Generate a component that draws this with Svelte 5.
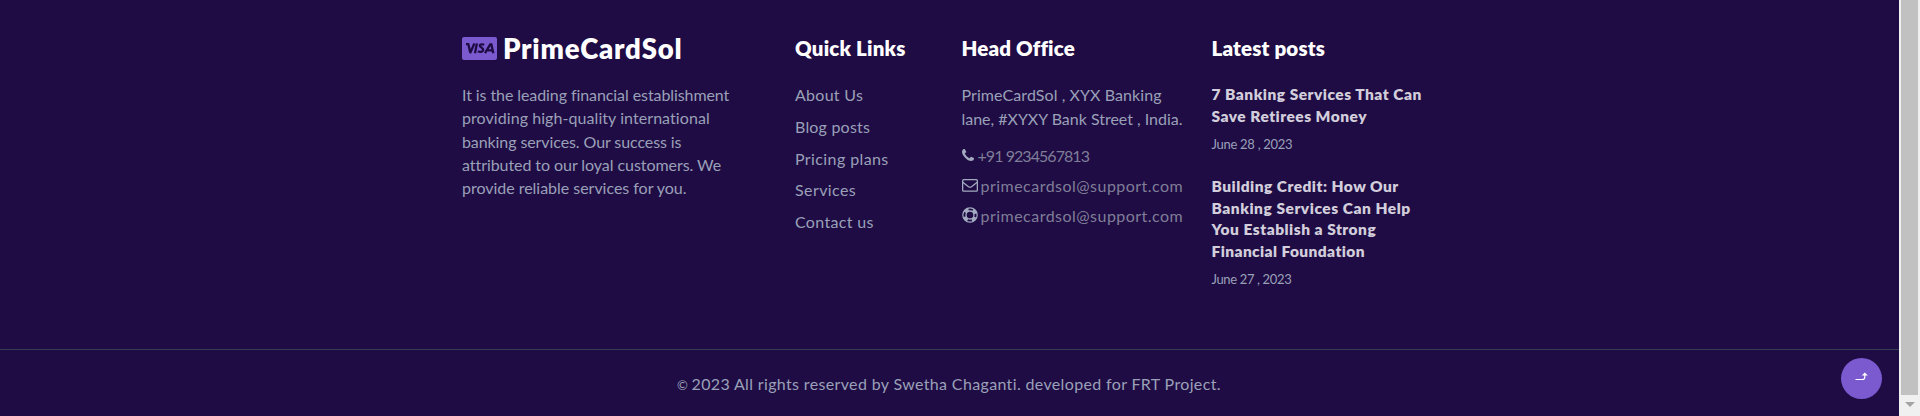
<script>
  const about = [
    ['It is the leading financial establishment', 267],
    ['providing high-quality international', 248],
    ['banking services. Our success is', 219.5],
    ['attributed to our loyal customers. We', 258.5],
    ['provide reliable services for you.', 224.5],
  ];
  const links = [
    ['About Us', 68],
    ['Blog posts', 75],
    ['Pricing plans', 93.5],
    ['Services', 61],
    ['Contact us', 78.5],
  ];
  const address = [
    ['PrimeCardSol , XYX Banking', 200],
    ['lane, #XYXY Bank Street , India.', 221],
  ];
  const posts = [
    {
      title: [['7 Banking Services That Can', 210], ['Save Retirees Money', 155.5]],
      date: ['June 28 , 2023', 81],
    },
    {
      title: [
        ['Building Credit: How Our', 187],
        ['Banking Services Can Help', 199],
        ['You Establish a Strong', 164.5],
        ['Financial Foundation', 153.5],
      ],
      date: ['June 27 , 2023', 80],
    },
  ];

  // Tracks a line of text so that it fills its measure.
  function fit(node, width) {
    const natural = node.getBoundingClientRect().width;
    node.style.letterSpacing = `${(width - natural) / (node.textContent.length - 0.5)}px`;
  }
</script>

{#snippet line([text, width])}
  <span class="line"><span class="fit" use:fit={width}>{text}</span></span>
{/snippet}

<div class="page">
  <footer>
    <div class="columns">
      <section class="brand">
        <div class="logo">
          <svg width="35" height="23" viewBox="0 0 35 23">
            <rect width="35" height="23" rx="2" fill="#7b5ad0" />
            <g fill="none" stroke="#1f0c44" stroke-width="2.3">
              <path d="M4 7.2h2.3l2 8.2M8 16.2l4.4-9.6M14.9 6.4l-1.9 9.8" />
              <path d="M22.2 7.8c-2-.9-4.3-.6-4.4.9-.1 1.8 3.7 2 3.4 4.2-.2 2-3 2.6-5.4 1.4" />
              <path d="M23 16.2l5.2-8.8h1.2l1.9 8.8M25.6 13.4h5" />
            </g>
          </svg>
          <h2><span class="fit" use:fit={179}>PrimeCardSol</span></h2>
        </div>
        <p class="about">
          {#each about as row}{@render line(row)}{/each}
        </p>
      </section>

      <section class="quick">
        <h3><span class="fit" use:fit={110.5}>Quick Links</span></h3>
        <ul>
          {#each links as row}<li>{@render line(row)}</li>{/each}
        </ul>
      </section>

      <section class="office">
        <h3><span class="fit" use:fit={112.5}>Head Office</span></h3>
        <p class="address">
          {#each address as row}{@render line(row)}{/each}
        </p>
        <div class="contact phone">
          <svg width="12" height="12" viewBox="0 0 1408 1408" fill="currentColor">
            <path d="M1408 1112q0 27-10 70.500t-21 68.500q-21 50-122 106-94 51-186 51-27 0-52.500-3.500t-57.500-12.500-47.500-14.500-55.500-20.500-49-18q-98-35-175-83-128-79-264.500-215.500t-215.500-264.500q-48-77-83-175-3-9-18-49t-20.500-55.500-14.500-47.500-12.500-57.500-3.500-52.500q0-92 51-186 56-101 106-122 25-11 68.500-21t70.500-10q14 0 21 3 18 6 53 76 11 19 30 54t35 63.500 31 53.500q3 4 17.500 25t21.500 35.500 7 28.500q0 20-28.500 50t-62 55-62 53-28.500 46q0 9 5 22.500t8.500 20.500 14 24 11.500 19q76 137 174 235t235 174q2 1 19 11.500t24 14 20.500 8.500 22.500 5q18 0 46-28.500t53-62 55-62 50-28.500q14 0 28.500 7t35.500 21.500 25 17.500q25 15 53.500 31t63.500 35 54 30q70 35 76 53 3 7 3 21z" />
          </svg>
          <span class="fit" use:fit={112}>+91 9234567813</span>
        </div>
        <div class="contact">
          <svg width="16" height="13" viewBox="0 0 16 13" fill="none" stroke="currentColor" stroke-width="1.3">
            <rect x=".65" y=".65" width="14.7" height="11.5" rx="1" />
            <path d="M.8 3.2l5.7 4.5q1.5 1 3 0l5.7-4.5" />
          </svg>
          <span class="fit" use:fit={202.5}>primecardsol@support.com</span>
        </div>
        <div class="contact">
          <svg width="16" height="16" viewBox="0 0 16 16" fill="none" stroke="currentColor">
            <circle cx="8" cy="8" r="7.2" stroke-width="1.2" />
            <circle cx="8" cy="8" r="4" stroke-width="1.3" />
            <circle cx="8" cy="8" r="5.7" stroke-width="3.6" stroke-dasharray="4.5 4.453" stroke-dashoffset="-2.23" />
          </svg>
          <span class="fit" use:fit={202.5}>primecardsol@support.com</span>
        </div>
      </section>

      <section class="latest">
        <h3><span class="fit" use:fit={113.5}>Latest posts</span></h3>
        {#each posts as post}
          <article>
            <h4>{#each post.title as row}{@render line(row)}{/each}</h4>
            <time>{@render line(post.date)}</time>
          </article>
        {/each}
      </section>
    </div>

    <div class="copyright">
      <span class="mark">©</span>
      <span class="fit" use:fit={529.5}>2023 All rights reserved by Swetha Chaganti. developed for FRT Project.</span>
    </div>
    <button class="top" aria-label="Back to top">
      <svg width="14" height="9" viewBox="0 0 14 9">
        <path d="M.5 7.5h7q2.300 0 2.300-2.500V3" fill="none" stroke="#fff" stroke-width="1.2" />
        <path d="M6.800 3.500L9.800.500l3 3z" fill="#fff" />
      </svg>
    </button>
  </footer>
  <div class="scrollbar">
    <div class="thumb"></div>
    <svg width="10" height="5" viewBox="0 0 10 5"><path d="M0 0h10L5 5z" fill="#a3a3a3" /></svg>
  </div>
</div>

<style>
  :global(body) { background: #1f0c44; }
  .page {
    display: flex;
    height: 416px;
    overflow: hidden;
    font-family: Lato, "Noto Sans", sans-serif;
    font-size: 16px;
    color: #9aa0b8;
  }
  footer {
    position: relative;
    flex: 1;
    background: #1f0c44;
  }
  .columns {
    display: grid;
    grid-template-columns: 333px 166.5px 250px 250px;
    box-sizing: border-box;
    height: 349px;
    padding: 33px 0 0 462px;
  }
  h2, h3, h4, p, ul { margin: 0; padding: 0; font-weight: 400; }
  ul { list-style: none; }
  .line { display: block; }
  .fit { display: inline-block; white-space: pre; }
  .logo { display: flex; align-items: center; height: 31px; gap: 6px; }
  h2 { font-size: 27.5px; line-height: 30px; font-weight: 800; color: #fff; }
  h3 { font-size: 20.5px; line-height: 30px; font-weight: 800; color: #fff; }
  .about { margin-top: 19px; line-height: 23.3px; }
  ul { margin-top: 16px; }
  li { line-height: 31.8px; }
  .address { margin-top: 20px; line-height: 24px; }
  .contact { display: flex; align-items: center; gap: 3px; height: 30px; color: #a3aac0; }
  .contact .fit { color: #7f7e98; }
  .phone { margin-top: 9px; gap: 4px; }
  .latest article { margin-top: 21px; }
  .latest article + article { margin-top: 22.7px; }
  h4 { font-size: 15.5px; line-height: 21.5px; font-weight: 800; color: #d2cedb; }
  time { display: block; margin-top: 6.5px; font-size: 13px; line-height: 20px; }
  .copyright {
    display: flex;
    box-sizing: border-box;
    height: 67px;
    padding: 21.5px 0 0 677px;
    border-top: 1px solid #353d52;
    line-height: 24px;
  }
  .mark { width: 14.5px; font-size: 13px; line-height: 26px; }
  .top {
    position: absolute;
    right: 17px;
    bottom: 17px;
    display: flex;
    align-items: center;
    justify-content: center;
    width: 41px;
    height: 41px;
    padding: 0 0 4px;
    border: 0;
    border-radius: 50%;
    background: #7b5ad0;
  }
  .scrollbar {
    display: flex;
    flex-direction: column;
    align-items: center;
    gap: 7px;
    width: 21px;
    background: #f0f0f0;
  }
  .thumb { width: 17px; height: 395px; background: #c1c1c1; }
</style>
